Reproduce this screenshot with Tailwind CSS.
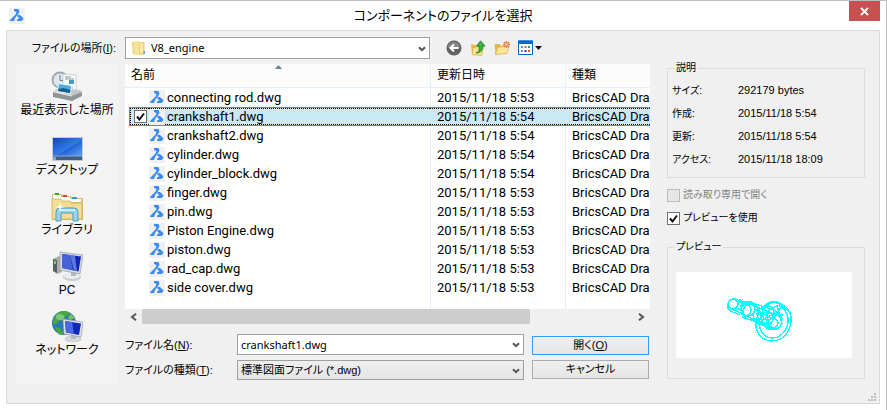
<!DOCTYPE html>
<html lang="ja">
<head>
<meta charset="utf-8">
<meta name="viewport" content="width=device-width, initial-scale=1">
<title>コンポーネントのファイルを選択</title>
<script src="https://cdn.jsdelivr.net/npm/@tailwindcss/browser@4"></script>
</head>
<body class="bg-white text-black font-['Liberation_Sans','Noto_Sans_CJK_JP',sans-serif] text-[12px] leading-4 [font-feature-settings:'palt']">
<svg class="hidden" aria-hidden="true">
  <symbol id="brics" viewBox="0 0 16 16">
    <path fill="#eef0f2" d="M0 0h16v16H0z"/>
    <path fill="#3c8cf0" d="M5 1h4.500L10.500 3.500 9 6.500 6.500 9.200 5 13H1l.5-1.500 5-5 1-2.500L5 3z"/>
    <path fill="#3c8cf0" d="M8.500 7H11l3.200 3v1.500L12.500 13H8v-1.500l2.500-1.500-2-1z"/>
  </symbol>
  <symbol id="chev" viewBox="0 0 8 6"><path d="M1 1.200 4 4.200l3-3" fill="none" stroke="#555" stroke-width="2"/></symbol>
  <symbol id="folder" viewBox="0 0 16 16">
    <path fill="#e8c75c" d="M1 2h5l1 1.500V15l-5-1z"/><path fill="#f7e39a" d="M2 1.500 8 1v13l-5 1.500z"/><path fill="#ecd072" d="M8 2h5.500v12.500L8 15z"/><path fill="#f8e9ad" d="M9 3h3v10H9z"/><path fill="#5aa5d8" d="M12.500 11h1.500v3h-1.500z"/>
  </symbol>
</svg>

<div class="border-t border-r border-[#bfbfbf] min-h-[410px]">
  <header class="flex h-[29px] items-start">
    <svg class="ml-[9px] mt-[7px] size-4 shrink-0"><use href="#brics"/></svg>
    <h1 class="flex-1 pl-3 pt-[6px] text-center text-[13px] leading-[18px] font-normal">コンポーネントのファイルを選択</h1>
    <button aria-label="閉じる" class="mr-[6px] flex h-5 w-[31px] items-center justify-center bg-[#c75050]">
      <svg class="size-[9px]" viewBox="0 0 9 9"><path d="m1 1 7 7M8 1 1 8" stroke="#fff" stroke-width="1.800"/></svg>
    </button>
  </header>

  <main class="relative mx-[6px] flex border border-[#d9d9d9] bg-[#f0f0f0] pb-[19px] pl-[9px] pr-[14px]">
    <div class="min-w-0 flex-1 pt-[6px]">
      <div class="mb-[5px] flex h-[22px] items-center">
        <label for="loc" class="w-[102px] pr-[2px] text-right text-[11px]">ファイルの場所(<u>I</u>):</label>
        <div class="relative ml-[7px] mr-[16px] h-[22px] w-[305px]">
          <select id="loc" class="h-full w-full appearance-none border border-[#a0a0a0] bg-white pl-[25px] text-[11px] font-['Noto_Sans',sans-serif]"><option>V8_engine</option></select>
          <svg class="pointer-events-none absolute left-[6px] top-[3px] size-4"><use href="#folder"/></svg>
          <svg class="pointer-events-none absolute right-[4px] top-[9px] h-[6px] w-2"><use href="#chev"/></svg>
        </div>
        <div class="flex items-center gap-2">
          <button aria-label="戻る"><svg class="block size-4" viewBox="0 0 16 16"><circle cx="8" cy="8" r="7.500" fill="#5c5c5c"/><circle cx="8" cy="8" r="6.200" fill="#858585"/><path d="M2 8a6 6 0 0 0 12 0z" fill="#5e5e5e"/><path d="M12.500 8H5M8 4.500 4.500 8 8 11.500" fill="none" stroke="#fff" stroke-width="2"/></svg></button>
          <button aria-label="上へ"><svg class="block size-4" viewBox="0 0 16 16"><path d="M1 4.500h4l1 1.500h6.500l-1.500 9L2 14z" fill="#e3bd4e"/><path d="M3 7.500 14 6l-2.500 9.500L2 14.500z" fill="#f8e28e" stroke="#caa53d" stroke-width=".6"/><path d="M6 13c3-1 3.500-3 3-7H6.500L10.500.800 15 6h-2.500c.4 4-1.500 7-6.500 7z" fill="#38b53f" stroke="#17701d" stroke-width=".7"/></svg></button>
          <button aria-label="新しいフォルダー"><svg class="block size-4" viewBox="0 0 16 16"><path d="M.5 4h5l1 1.500H12v8L1.500 14.500z" fill="#e3b94a"/><path d="m1.500 14.500 2-7L9 6.500l6-.2-2 7.200z" fill="#fbe596" stroke="#d0a941" stroke-width=".6"/><path d="M12.500 1v7M9 4.500h7M10 2l5 5M15 2l-5 5" stroke="#f2793d" stroke-width="1.300"/><circle cx="12.500" cy="4.500" r="1.300" fill="#ffd9b5"/></svg></button>
          <button aria-label="表示メニュー"><svg class="block h-4 w-6" viewBox="0 0 24 16"><path d="M.5 1h14v13.500H.5z" fill="#fff" stroke="#0b62c4"/><path d="M0 .5h15v3.500H0z" fill="#0b66cf"/><path d="M3 6h2v2H3zM3 10h2v2H3z" fill="#6d8dc0"/><path d="M6.500 6h2v2h-2z" fill="#777"/><path d="M10 6h2v2h-2z" fill="#2f9a54"/><path d="M6.500 10h2v2h-2z" fill="#123caf"/><path d="M10 10h2v2h-2z" fill="#d66030"/><path d="M17 6h7l-3.500 4z" fill="#111"/></svg></button>
        </div>
      </div>

      <div class="flex gap-[7px]">
        <nav class="flex w-[102px] shrink-0 flex-col gap-3 bg-[#f3f3f3] pb-[26px] pt-[6px]">
          <button class="flex flex-col items-center">
            <svg class="size-8" viewBox="0 0 32 32"><circle cx="9" cy="10" r="7.500" fill="#dfe7ec" stroke="#9aa8b1" stroke-width="1.800"/><path d="M9 5v5.500h4" fill="none" stroke="#6f7f8c"/><path d="m12 4 13 1v16H12z" fill="#fafcfd" stroke="#b8c0c5" stroke-width=".7"/><path d="M14 7h6M14 9h9M14 18h8" stroke="#87929b"/><path d="M18 10h5v4h-5z" fill="#469cba"/><path d="m2 22 6-4 21 2 2 2-9 7-20-4z" fill="#c3c5c6"/><path d="m2 22 19 4v5L2 27zM21 26l10-4v4l-10 5z" fill="#8f9496"/><path d="m3 22 18 4" stroke="#eee"/><path d="m7 13 14 2-1 9-14-2z" fill="#e9f7ff"/><path d="m8 14 12 2-1 7-12-2z" fill="#49ade6"/><path d="m7.500 19 5-1 7 2-.5 3-12-2z" fill="#1b5e87"/></svg>
            最近表示した場所</button>
          <button class="flex flex-col items-center">
            <svg class="size-8" viewBox="0 0 32 32"><defs><linearGradient id="dg" x1="0" y1="0" x2="1" y2="1"><stop stop-color="#1147b8"/><stop offset=".55" stop-color="#337bea"/><stop offset=".56" stop-color="#2260d5"/><stop offset="1" stop-color="#5fa4f5"/></linearGradient></defs><path d="M1 7h31v24H1z" fill="#c3c9cf"/><path d="M2 8h29v18H2z" fill="url(#dg)"/><path d="M2 26h29v4H2z" fill="#3f5d86"/><path d="M2 26h29" stroke="#8caacf"/><path d="M2 27h3v3H2z" fill="#75a8cd"/></svg>
            デスクトップ</button>
          <button class="flex flex-col items-center">
            <svg class="size-8" viewBox="0 0 32 32"><path d="M1 4h10l1 2h8l1 2h11v22H1z" fill="#dcbf6c"/><path d="M2 5h8v5H2zM10 7h9v4h-9zM19 9h11v3H19z" fill="#fff"/><path d="M4 3h4v2H4z" fill="#29a83b"/><path d="M12 5h4v2h-4z" fill="#d34632"/><path d="M21 7h5v2h-5z" fill="#3298dc"/><path d="M1 9h9l1 2h8l1 2h11v16H1z" fill="#f4dc91" stroke="#ceae58" stroke-width=".8"/><path d="M5 31V22q0-4 4-4h14q4 0 4 4v9h-5v-8H10v8z" fill="#99d2ec" stroke="#4c9fc4"/><path d="M8 20h16" stroke="#d9f4ff" stroke-width="1.500"/><path d="m9 12 .8 4.200L14 17l-4.200.8L9 22l-.8-4.200L4 17l4.200-.8z" fill="#fff"/></svg>
            ライブラリ</button>
          <button class="flex flex-col items-center">
            <svg class="size-8" viewBox="0 0 32 32"><path d="m2 9 6-3 3 1v15l-5 2-4-3z" fill="#a8adaf"/><path d="m2 9 4 1v13l-4-2z" fill="#596065"/><path d="M3 11h2v3H3z" fill="#4de063"/><ellipse cx="21" cy="27" rx="9" ry="4" fill="#c6cbcf"/><ellipse cx="21" cy="26" rx="8" ry="3" fill="#e9edef"/><path d="M20 20h5v6h-5z" fill="#b3bac0"/><path d="m9 2 23 3-3 19-20-4z" fill="#d6dade" stroke="#979da1" stroke-width=".7"/><path d="m11 4 19 2.500-2.500 15L11 18z" fill="#1025b5"/><path d="m11 4 8 1 3 15-11-2z" fill="#4564dc"/><path d="m19 5 5 1 2 15-3-.500z" fill="#7c9dea" opacity=".7"/></svg>
            PC</button>
          <button class="flex flex-col items-center">
            <svg class="size-8" viewBox="0 0 32 32"><circle cx="13" cy="13" r="12" fill="#2c79bb"/><path d="M8 2c5-2 9-1 11 2l-4 2-2 4-5 1-4 4-2-2C2 8 5 4 8 2zM4 17l5 1 3 5-1 2C7 24 5 21 4 17z" fill="#46a93b"/><path d="m20 4 4 4-5 2-2-3z" fill="#75c64a"/><ellipse cx="9" cy="7" rx="4" ry="3" fill="#b8e7cc" opacity=".5"/><ellipse cx="22" cy="29" rx="8" ry="3" fill="#d5dadd" stroke="#a8afb4" stroke-width=".5"/><path d="M20 24h5v5h-5z" fill="#b5bdc2"/><path d="m12 9 20 3-2 15-17-3z" fill="#e0e4e7" stroke="#92999e" stroke-width=".7"/><path d="m14 11 16 2.500-2 11.500-13-2.500z" fill="#1128bd"/><path d="m14 11 7 1 2 11.500-8-1z" fill="#4869df"/></svg>
            ネットワーク</button>
        </nav>

        <div class="min-w-0 flex-1">
          <div class="overflow-hidden bg-white font-['Roboto','Noto_Sans_CJK_JP',sans-serif] text-[13px] leading-[17px]">
            <table class="w-full table-fixed border-separate border-spacing-0">
              <colgroup><col class="w-[4px]"><col class="w-[20px]"><col><col class="w-[135px]"><col class="w-[85px]"></colgroup>
              <thead class="text-[12px]">
                <tr class="h-6 bg-[#fcfcfc] text-left *:border-b *:border-[#e5effa] *:p-0 *:font-normal">
                  <th colspan="3" class="relative"><span class="pl-[6px]">名前</span><svg class="absolute left-1/2 top-[1px] -ml-[3px] h-[4px] w-[7px]" viewBox="0 0 7 4"><path d="M0 4 3.500 0 7 4z" fill="#5b86a0"/></svg></th>
                  <th class="border-l"><span class="pl-[6px]">更新日時</span></th>
                  <th class="border-l"><span class="pl-[6px]">種類</span></th>
                </tr>
              </thead>
              <tbody id="files"></tbody>
            </table>
          </div>
          <div class="flex h-[15px] items-center">
            <button aria-label="左へスクロール" class="flex w-[17px] justify-center"><svg class="h-[8px] w-[7px]" viewBox="0 0 7 8"><path d="M6 .800 2 4l4 3.200" fill="none" stroke="#555" stroke-width="2"/></svg></button>
            <div class="h-full flex-1"><div class="h-full w-[79%] bg-[#cdcdcd]"></div></div>
            <button aria-label="右へスクロール" class="flex w-[17px] justify-center"><svg class="h-[8px] w-[7px]" viewBox="0 0 7 8"><path d="M1 .800 5 4 1 7.200" fill="none" stroke="#555" stroke-width="2"/></svg></button>
          </div>

          <form class="mt-[10px] flex items-center gap-2 pr-[1px] text-[11px]" onsubmit="return false">
            <div class="grid flex-1 grid-cols-[112px_minmax(0,1fr)] items-center gap-y-[5px]">
              <label for="fname">ファイル名(<u>N</u>):</label>
              <div class="relative h-[21px]">
                <input id="fname" value="crankshaft1.dwg" class="h-full w-full border border-[#a0a0a0] bg-white px-[3px] font-['Noto_Sans',sans-serif]">
                <svg class="pointer-events-none absolute right-[4px] top-[8px] h-[6px] w-2"><use href="#chev"/></svg>
              </div>
              <label for="ftype">ファイルの種類(<u>T</u>):</label>
              <div class="relative h-[20px]">
                <select id="ftype" class="block h-full w-full appearance-none border border-[#a0a0a0] bg-linear-to-b from-[#efefef] to-[#e5e5e5] px-[3px]"><option>標準図面ファイル (*.dwg)</option></select>
                <svg class="pointer-events-none absolute right-[4px] top-[8px] h-[6px] w-2"><use href="#chev"/></svg>
              </div>
            </div>
            <div class="flex w-[117px] flex-col gap-[5px]">
              <button class="h-[19px] border border-[#3399ff] bg-linear-to-b from-[#f0f0f0] to-[#e5e5e5]">開く(<u>O</u>)</button>
              <button class="h-[19px] border border-[#acacac] bg-linear-to-b from-[#f0f0f0] to-[#e5e5e5]">キャンセル</button>
            </div>
          </form>
        </div>
      </div>
    </div>

    <aside class="ml-[17px] w-[198px] shrink-0 pt-[30px] text-[10px]">
      <fieldset class="border border-[#dcdcdc] pb-[6px] pl-[4px] pt-[4px]">
        <legend class="ml-[2px] px-[2px] leading-[14px]">説明</legend>
        <dl class="grid grid-cols-[66px_1fr] leading-[23px] [&_dd]:text-[11px]">
          <dt>サイズ:</dt><dd>292179 bytes</dd>
          <dt>作成:</dt><dd>2015/11/18 5:54</dd>
          <dt>更新:</dt><dd>2015/11/18 5:54</dd>
          <dt>アクセス:</dt><dd>2015/11/18 18:09</dd>
        </dl>
      </fieldset>
      <label class="mt-[10px] flex h-[14px] items-center gap-[3px] text-[#838383]">
        <input type="checkbox" disabled class="size-[13px] appearance-none border border-[#bcbcbc] bg-[#e6e6e6]">読み取り専用で開く</label>
      <label class="mt-[9px] flex h-[14px] items-center gap-[3px]">
        <span class="relative flex"><input type="checkbox" checked class="size-[13px] appearance-none border border-[#707070] bg-white"><svg class="pointer-events-none absolute inset-0 size-[13px]" viewBox="0 0 13 13"><path d="m3 6.500 2.500 3L10 3.500" fill="none" stroke="#111" stroke-width="2"/></svg></span>プレビューを使用</label>
      <fieldset class="mt-[15px] border border-[#dcdcdc] pb-[20px] pl-[8px] pr-[12px] pt-[18px]">
        <legend class="-ml-[2px] px-[2px] leading-[14px]">プレビュー</legend>
        <svg class="block w-full bg-white" viewBox="0 0 176 86" shape-rendering="crispEdges" fill="none" stroke="#0ff" stroke-width="1.300">
          <circle cx="57" cy="32" r="5"/><path d="M52 33v4l4 3M58 26l8 4M62 30h6M55 37l10 4M60 36l8 3M54 39l10 4M63 27l6 4"/>
          <circle cx="72" cy="37" r="7"/><ellipse cx="70" cy="38" rx="5" ry="6"/><circle cx="75" cy="40" r="8"/>
          <path d="M65 33c3-5 11-5 14 0M64 35c3-5 11-5 14 0M66 45l14 5 8 2M65 42l12 5 12 4M76 31l22 7M78 34l20 8M78 38l18 8M76 47l20 8M80 50l16 7"/>
          <ellipse cx="81" cy="43" rx="4" ry="5"/><ellipse cx="86" cy="42" rx="5" ry="6"/><circle cx="91" cy="46" r="6"/><ellipse cx="92" cy="41" rx="6" ry="7"/>
          <circle cx="98" cy="50" r="7.500"/><circle cx="97" cy="51" r="5"/>
          <path d="M87 38c2-9 14-12 20-4l4 4M89 36c4-7 13-7 18-1M92 32c4-3 10-3 13 0M92 39l10-6 8 6M91 41l16 2M95 34l12 13M105 35l-11 18M101 33l5 19"/>
          <path d="M80 51c-1 8 5 18 16 18 13 0 20-12 19-24-1-7-4-10-8-12"/><path d="M83 52c1 8 6 14 13 14 10 0 17-10 16-20-1-6-3-9-8-12"/><path d="M88 54c3 4 10 4 13 2M107 35l7 5 1 8M80 51l3 1"/>
        </svg>
      </fieldset>
    </aside>
    <svg class="absolute bottom-[2px] right-[3px] size-[8px]" viewBox="0 0 8 8" fill="#bbb"><path d="M6 0h2v2H6zM3 3h2v2H3zM6 3h2v2H6zM0 6h2v2H0zM3 6h2v2H3zM6 6h2v2H6z"/></svg>
  </main>
</div>

<script>
const files = [
  ["connecting rod.dwg", "5:53"], ["crankshaft1.dwg", "5:54", true], ["crankshaft2.dwg", "5:54"],
  ["cylinder.dwg", "5:54"], ["cylinder_block.dwg", "5:54"], ["finger.dwg", "5:53"],
  ["pin.dwg", "5:53"], ["Piston Engine.dwg", "5:53"], ["piston.dwg", "5:53"],
  ["rad_cap.dwg", "5:53"], ["side cover.dwg", "5:53"]
];
const check = '<span class="absolute left-[3px] top-[1px]"><input type="checkbox" checked aria-label="選択" class="block size-[13px] appearance-none border border-[#707070] bg-white"><svg class="pointer-events-none absolute inset-0 size-[13px]" viewBox="0 0 13 13"><path d="m3 6.500 2.500 3L10 3.500" fill="none" stroke="#111" stroke-width="2"/></svg></span>';
document.getElementById("files").innerHTML = files.map(([name, time, selected]) => {
  const cell = selected ? "p-0 bg-[#cbe8f6] border-y border-[#26a0da]" : "p-0";
  const box = selected
    ? "relative flex h-[17px] items-center border-y border-dotted border-black whitespace-nowrap"
    : "relative flex h-[19px] items-center whitespace-nowrap";
  const line = selected ? "" : " border-l border-[#e5effa]";
  const pad = selected ? " pl-[7px]" : " pl-[6px]";
  return `<tr><td class="p-0"></td>
    <td class="${cell}${selected ? " border-l" : ""}"><div class="${box}${selected ? " border-l" : ""}">${selected ? check : ""}</div></td>
    <td class="${cell}"><div class="${box}"><svg class="mr-[2px] size-4 shrink-0"><use href="#brics"/></svg>${name}</div></td>
    <td class="${cell}${line}"><div class="${box}${pad}">2015/11/18 ${time}</div></td>
    <td class="${cell}${line}"><div class="${box}${pad}">BricsCAD Dra</div></td></tr>`;
}).join("") + '<tr class="h-3"><td colspan="3" class="p-0"></td><td class="border-l border-[#e5effa] p-0"></td><td class="border-l border-[#e5effa] p-0"></td></tr>';
</script>
</body>
</html>
